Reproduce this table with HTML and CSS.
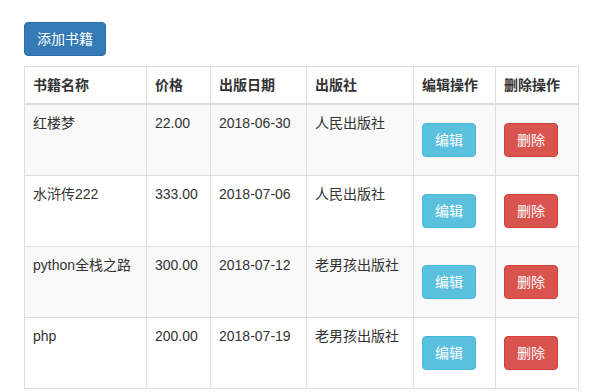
FILE: index.html
```html
<!DOCTYPE html>
<html lang="zh">
<head>
<meta charset="utf-8">
<title>书籍列表</title>
<link rel="stylesheet" href="styles.css">
</head>
<body>
<div class="page">
  <div class="toolbar">
    <a class="btn btn-primary">添加书籍</a>
  </div>
  <table class="books">
    <thead>
      <tr>
        <th class="c-name">书籍名称</th>
        <th class="c-price">价格</th>
        <th class="c-date">出版日期</th>
        <th class="c-pub">出版社</th>
        <th class="c-edit">编辑操作</th>
        <th class="c-del">删除操作</th>
      </tr>
    </thead>
    <tbody>
      <tr>
        <td>红楼梦</td><td>22.00</td><td>2018-06-30</td><td>人民出版社</td>
        <td><a class="btn btn-info">编辑</a></td>
        <td><a class="btn btn-danger">删除</a></td>
      </tr>
      <tr>
        <td>水浒传222</td><td>333.00</td><td>2018-07-06</td><td>人民出版社</td>
        <td><a class="btn btn-info">编辑</a></td>
        <td><a class="btn btn-danger">删除</a></td>
      </tr>
      <tr>
        <td>python全栈之路</td><td>300.00</td><td>2018-07-12</td><td>老男孩出版社</td>
        <td><a class="btn btn-info">编辑</a></td>
        <td><a class="btn btn-danger">删除</a></td>
      </tr>
      <tr>
        <td>php</td><td>200.00</td><td>2018-07-19</td><td>老男孩出版社</td>
        <td><a class="btn btn-info">编辑</a></td>
        <td><a class="btn btn-danger">删除</a></td>
      </tr>
    </tbody>
  </table>
</div>
</body>
</html>
```
FILE: styles.css
```css
html, body {
  margin: 0;
  padding: 0;
  background: #fff;
}
body {
  font-family: "Liberation Sans", "Noto Sans CJK SC", sans-serif;
  font-size: 14px;
  line-height: 20px;
  color: #333;
}
.page {
  padding: 22px 0 0 24px;
}
.toolbar {
  height: 34px;
  margin-bottom: 10px;
}
.btn {
  display: inline-block;
  box-sizing: border-box;
  height: 34px;
  padding: 6px 12px;
  border: 1px solid transparent;
  border-radius: 4px;
  font-size: 14px;
  line-height: 20px;
  color: #fff;
  text-decoration: none;
  white-space: nowrap;
  vertical-align: top;
}
.btn-primary {
  background: #337ab7;
  border-color: #2e6da4;
}
.btn-info {
  background: #5bc0de;
  border-color: #46b8da;
  margin: 10px 0;
}
.btn-danger {
  background: #d9534f;
  border-color: #d43f3a;
  margin: 10px 0;
}
.books {
  width: 554px;
  border-collapse: collapse;
  border-spacing: 0;
  border: 1px solid #ddd;
  table-layout: fixed;
}
.books th, .books td {
  border: 1px solid #ddd;
  padding: 8px;
  text-align: left;
  vertical-align: top;
  line-height: 20px;
  white-space: nowrap;
}
.books th {
  font-weight: bold;
  border-bottom-width: 2px;
}
.books tbody tr:nth-child(odd) {
  background: #f9f9f9;
}
.c-name { width: 105px; }
.c-price { width: 47px; }
.c-date { width: 79px; }
.c-pub { width: 90px; }
.c-edit { width: 65px; }
.c-del { width: 66px; }
```
